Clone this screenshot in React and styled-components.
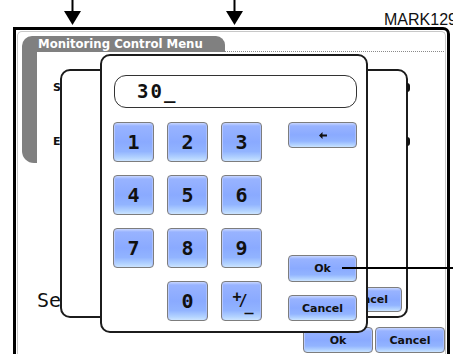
import React from 'react';
import styled, { createGlobalStyle, css } from 'styled-components';

const GlobalStyle = createGlobalStyle`
    html, body {
        margin: 0;
        padding: 0;
        background: #fff;
    }
    body {
        font-family: "DejaVu Sans", sans-serif;
    }
`;

const Stage = styled.div`
    position: relative;
    width: 453px;
    height: 354px;
    overflow: hidden;
    background: #fff;
`;

const Frame = styled.div`
    box-sizing: border-box;
    margin: 27px 0 0 13px;
    width: 437px;
    height: 340px;
    border: 3px solid #000;
    border-bottom: none;
    border-radius: 0 7px 0 0;
    padding: 1px;
`;

const Inner = styled.div`
    box-sizing: border-box;
    height: 100%;
    border: 1px solid #c8c8c8;
    border-bottom: none;
    border-radius: 5px 5px 0 0;
    padding: 4px 0 0 4px;
    display: flex;
    flex-direction: column;
`;

const HeaderRow = styled.div`
    display: flex;
    align-items: flex-end;
    height: 16px;
`;

const Tab = styled.div`
    box-sizing: border-box;
    width: 203px;
    height: 16px;
    padding-left: 16px;
    background: #808080;
    border-radius: 10px 9px 0 0;
    color: #fff;
    font: bold 11.7px/16px "DejaVu Sans", sans-serif;
    white-space: nowrap;
`;

const Dots = styled.div`
    flex: 1;
    border-bottom: 1px dotted #8a8a8a;
    margin-right: 1px;
`;

const Body = styled.div`
    display: flex;
    flex: 1;
`;

const Strip = styled.div`
    flex-shrink: 0;
    width: 15px;
    height: 111px;
    background: #808080;
    border-bottom-left-radius: 12px;
`;

const Content = styled.div`
    flex: 1;
    display: flex;
    flex-direction: column;
`;

const FieldLabel = styled.div`
    margin: ${p => p.$top}px 0 0 16px;
    font: bold 11px/13px "DejaVu Sans", sans-serif;
    color: #111;
`;

const BigText = styled.div`
    margin-top: ${p => p.$top}px;
    font: 20px/22px "DejaVu Sans Mono", monospace;
    color: #111;
`;

const ButtonRow = styled.div`
    display: flex;
    justify-content: flex-end;
    gap: 2px;
    margin-top: ${p => p.$top || 0}px;
`;

const blueFace = css`
    box-sizing: border-box;
    border: 1px solid #7d7d7d;
    border-radius: 4px;
    background: linear-gradient(180deg, #c8d6ff 0, #98b3ff 3px, #8aaaff 50%, #92b4ff 75%, #b4d4ff 92%, #cce4ff 100%);
    box-shadow: inset 1px 0 0 #b6c8ff, inset -1px 0 0 #aac0ff;
    color: #111;
    padding: 0;
    display: flex;
    align-items: center;
    justify-content: center;
`;

const WideButton = styled.button`
    ${blueFace};
    width: ${p => p.$w || 69}px;
    height: ${p => p.$h || 26}px;
    font: bold 11px "DejaVu Sans", sans-serif;
    margin-top: ${p => (p.$auto ? 'auto' : `${p.$top || 0}px`)};
`;

const Key = styled.button`
    ${blueFace};
    width: 41px;
    height: 40px;
    font: bold 20px "DejaVu Sans Mono", monospace;
`;

const PlusMinus = styled.span`
    position: relative;
    display: inline-flex;
    align-items: center;
    font: bold 15px "DejaVu Sans Mono", monospace;
    letter-spacing: -3px;
    span:first-child { transform: translateY(-4px); }
    span:last-child { transform: translateY(5px); }
`;

const BackDialog = styled.div`
    position: absolute;
    left: 60px;
    top: 69px;
    width: 348px;
    height: 249px;
    box-sizing: border-box;
    border: 2px solid #1c1c1c;
    border-radius: 10px;
    background: #fff;
    display: flex;
    flex-direction: column;
    justify-content: flex-end;
    padding: 0 4px 4px 0;

    &::before, &::after {
        content: "";
        position: absolute;
        right: -4px;
        width: 3px;
        height: 9px;
        background: #111;
        border-radius: 0 3px 3px 0;
    }
    &::before { top: 12px; }
    &::after { top: 66px; }
`;

const Keypad = styled.div`
    position: absolute;
    left: 100px;
    top: 54px;
    width: 268px;
    height: 279px;
    box-sizing: border-box;
    border: 2px solid #1c1c1c;
    border-radius: 10px;
    background: #fff;
    padding: 19px 9px 0 11px;
`;

const Display = styled.div`
    box-sizing: border-box;
    margin-left: 1px;
    width: 243px;
    height: 33px;
    border: 1px solid #333;
    border-radius: 12px;
    padding-left: 22px;
    font: bold 19px/31px "DejaVu Sans Mono", monospace;
    letter-spacing: 2px;
    color: #111;
`;

const Keys = styled.div`
    display: flex;
    margin-top: 14px;
`;

const NumGrid = styled.div`
    display: grid;
    grid-template-columns: repeat(3, 41px);
    grid-auto-rows: 40px;
    gap: 13px;
`;

const Side = styled.div`
    display: flex;
    flex-direction: column;
    width: 69px;
    margin-left: 26px;
`;

const Callout = styled.div`
    position: absolute;
    left: 342px;
    top: 267px;
    width: 111px;
    height: 2px;
    background: #000;
`;

const Mark = styled.div`
    position: absolute;
    left: 384px;
    top: 11px;
    font: 16px/18px "Liberation Sans", Arial, sans-serif;
    color: #111;
    white-space: nowrap;
`;

const ArrowSvg = styled.svg`
    position: absolute;
    top: 0;
    left: ${p => p.$x}px;
`;

const DownArrow = ({ x }) => (
    <ArrowSvg $x={x} width="22" height="26" viewBox="0 0 22 26">
        <rect x="9.5" y="0" width="2" height="12" fill="#000" />
        <polygon points="2,11 19,11 10.5,25" fill="#000" />
    </ArrowSvg>
);

const BackArrow = () => (
    <svg width="8" height="7" viewBox="0 0 8 7">
        <polygon points="0,3.5 3.5,0 3.5,2.5 8,2.5 8,4.5 3.5,4.5 3.5,7" fill="#111" />
    </svg>
);

const digits = ['1', '2', '3', '4', '5', '6', '7', '8', '9'];

const App = () => {
    return (
        <Stage>
            <GlobalStyle />
            <Frame>
                <Inner>
                    <HeaderRow>
                        <Tab>Monitoring Control Menu</Tab>
                        <Dots />
                    </HeaderRow>
                    <Body>
                        <Strip />
                        <Content>
                            <FieldLabel $top={29}>Start</FieldLabel>
                            <FieldLabel $top={41}>End</FieldLabel>
                            <BigText $top={141}>Setup</BigText>
                            <ButtonRow $top={16}>
                                <WideButton $w={70}>Ok</WideButton>
                                <WideButton $w={70}>Cancel</WideButton>
                            </ButtonRow>
                        </Content>
                    </Body>
                </Inner>
            </Frame>

            <BackDialog>
                <ButtonRow>
                    <WideButton $h={25}>Ok</WideButton>
                    <WideButton $h={25}>Cancel</WideButton>
                </ButtonRow>
            </BackDialog>

            <Keypad>
                <Display>30_</Display>
                <Keys>
                    <NumGrid>
                        {digits.map(d => <Key key={d}>{d}</Key>)}
                        <span />
                        <Key>0</Key>
                        <Key>
                            <PlusMinus><span>+</span>/<span>_</span></PlusMinus>
                        </Key>
                    </NumGrid>
                    <Side>
                        <WideButton><BackArrow /></WideButton>
                        <WideButton $auto $h={27}>Ok</WideButton>
                        <WideButton $top={13}>Cancel</WideButton>
                    </Side>
                </Keys>
            </Keypad>

            <DownArrow x={62} />
            <DownArrow x={224} />
            <Mark>MARK129</Mark>
            <Callout />
        </Stage>
    );
};

export default App;
